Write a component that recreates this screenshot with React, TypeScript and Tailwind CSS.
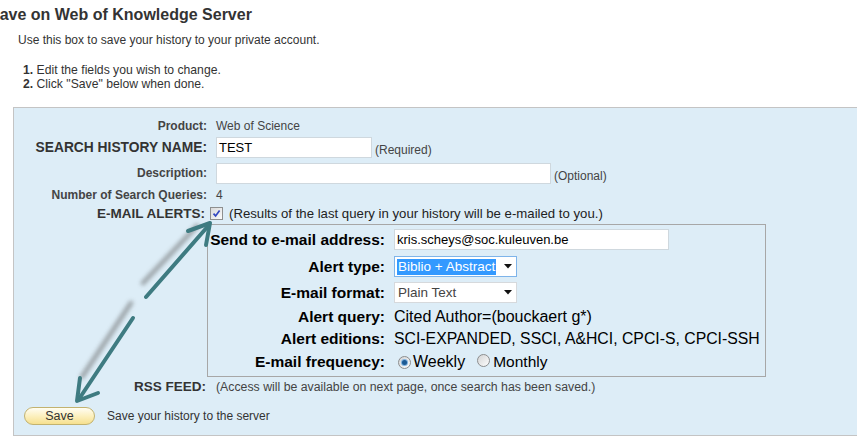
import React from "react";

function Checkbox() {
  return (
    <span className="inline-flex h-[13px] w-[13px] shrink-0 items-center justify-center border border-[#8e8f8f] bg-linear-to-br from-[#d9dadb] to-[#fbfbfb]">
      <svg width="9" height="9" viewBox="0 0 9 9">
        <path d="M1.5 4.6 L3.6 6.9 L7.6 1.6" fill="none" stroke="#3347c0" strokeWidth="1.7" />
      </svg>
    </span>
  );
}

function Radio({ checked }: { checked?: boolean }) {
  return (
    <span className="inline-flex h-[13px] w-[13px] shrink-0 items-center justify-center rounded-full border border-[#8c8d8e] bg-linear-to-br from-[#d3d4d5] to-[#fdfdfd]">
      {checked && <span className="h-[5px] w-[5px] rounded-full bg-[#1d5a94] shadow-[0_0_0_1px_#7fb2df]" />}
    </span>
  );
}

function SelectBox({ text, focused }: { text: string; focused?: boolean }) {
  return (
    <div
      className={
        focused
          ? "flex h-[21px] w-[123px] items-center justify-between border border-[#7eb4ea] bg-white pl-[2px] pr-[4px]"
          : "flex h-[21px] w-[123px] items-center justify-between border border-[#d6d9dc] bg-white pl-[2px] pr-[4px]"
      }
    >
      <span
        className={
          focused
            ? "bg-[#3399ff] px-[1px] text-[13.5px] leading-[16px] text-white"
            : "px-[1px] text-[13.5px] leading-[16px] text-[#444]"
        }
      >
        {text}
      </span>
      <svg width="8" height="5" viewBox="0 0 8 5">
        <path d="M0 0H8L4 4.5Z" fill="#111" />
      </svg>
    </div>
  );
}

export default function App() {
  return (
    <div className="relative h-[438px] w-[857px] overflow-hidden bg-white font-['Liberation_Sans',Arial,sans-serif] text-[#333]">
      <h1 className="ml-[-11px] whitespace-nowrap pt-[5px] text-[16px] font-bold leading-[20px] text-[#333]">
        Save on Web of Knowledge Server
      </h1>
      <p className="ml-[18px] mt-[8px] text-[12px] leading-[14px] text-[#333]">
        Use this box to save your history to your private account.
      </p>
      <div className="ml-[23px] mt-[16px] text-[12.2px] leading-[14px] text-[#333]">
        <div>
          <b>1.</b> Edit the fields you wish to change.
        </div>
        <div>
          <b>2.</b> Click "Save" below when done.
        </div>
      </div>

      <div className="ml-[13px] mt-[16px] h-[329px] border border-r-0 border-[#c4c4c4] bg-[#ddedf7] pt-[11px]">
        {/* Product */}
        <div className="flex h-[14px] items-center">
          <div className="w-[193px] shrink-0 text-right text-[12px] font-bold leading-[14px] text-[#444]">Product:</div>
          <div className="ml-[9px] text-[12px] leading-[14px] text-[#444]">Web of Science</div>
        </div>

        {/* Search history name */}
        <div className="mt-[4px] flex h-[21px] items-stretch">
          <div className="w-[193px] shrink-0 whitespace-nowrap text-right text-[13.8px] font-bold leading-[21px] text-[#333]">
            SEARCH HISTORY NAME:
          </div>
          <div className="ml-[9px] flex items-end">
            <div className="flex h-[21px] w-[156px] items-center border border-[#cfd8de] bg-white px-[2px] text-[13px] text-black">
              TEST
            </div>
            <span className="mb-[1px] ml-[3px] text-[12px] leading-[14px] text-[#444]">(Required)</span>
          </div>
        </div>

        {/* Description */}
        <div className="mt-[5px] flex h-[21px] items-stretch">
          <div className="w-[193px] shrink-0 text-right text-[12px] font-bold leading-[21px] text-[#444]">Description:</div>
          <div className="ml-[9px] flex items-end">
            <div className="h-[21px] w-[335px] border border-[#cfd8de] bg-white" />
            <span className="mb-[1px] ml-[3px] text-[12px] leading-[14px] text-[#444]">(Optional)</span>
          </div>
        </div>

        {/* Number of queries */}
        <div className="mt-[4px] flex h-[14px] items-center">
          <div className="w-[193px] shrink-0 text-right text-[12px] font-bold leading-[14px] text-[#444]">
            Number of Search Queries:
          </div>
          <div className="ml-[9px] text-[12px] leading-[14px] text-[#444]">4</div>
        </div>

        {/* E-mail alerts */}
        <div className="mt-[3px] flex h-[17px] items-center">
          <div className="w-[193px] shrink-0 pr-[2px] text-right text-[13.5px] font-bold leading-[17px] text-[#333]">
            E-MAIL ALERTS:
          </div>
          <div className="ml-[3px] flex items-center">
            <Checkbox />
            <span className="ml-[6px] whitespace-nowrap text-[13.2px] leading-[17px] text-[#222]">
              (Results of the last query in your history will be e-mailed to you.)
            </span>
          </div>
        </div>

        {/* Inner alert box */}
        <div className="ml-[193px] mt-[2px] h-[153px] w-[559px] border border-[#a7a7a7] pt-[4px] text-black">
          <div className="flex h-[21px] items-stretch">
            <div className="w-[177px] shrink-0 whitespace-nowrap text-right text-[15.5px] font-bold leading-[22px]">
              Send to e-mail address:
            </div>
            <div className="ml-[9px] flex h-[21px] w-[275px] items-center border border-[#cfd8de] bg-white px-[2px] text-[13px]">
              kris.scheys@soc.kuleuven.be
            </div>
          </div>

          <div className="mt-[6px] flex h-[21px] items-stretch">
            <div className="w-[177px] shrink-0 text-right text-[15.5px] font-bold leading-[22px]">Alert type:</div>
            <div className="ml-[9px]">
              <SelectBox text="Biblio + Abstract" focused />
            </div>
          </div>

          <div className="mt-[5px] flex h-[21px] items-stretch">
            <div className="w-[177px] shrink-0 text-right text-[15.5px] font-bold leading-[22px]">E-mail format:</div>
            <div className="ml-[9px]">
              <SelectBox text="Plain Text" />
            </div>
          </div>

          <div className="mt-[2px] flex h-[23px] items-center">
            <div className="w-[177px] shrink-0 text-right text-[15.5px] font-bold leading-[23px]">Alert query:</div>
            <div className="ml-[9px] whitespace-nowrap text-[16px] leading-[23px]">Cited Author=(bouckaert g*)</div>
          </div>

          <div className="flex h-[21px] items-center">
            <div className="w-[177px] shrink-0 text-right text-[15.5px] font-bold leading-[21px]">Alert editions:</div>
            <div className="ml-[9px] whitespace-nowrap text-[15.8px] leading-[21px]">
              SCI-EXPANDED, SSCI, A&amp;HCI, CPCI-S, CPCI-SSH
            </div>
          </div>

          <div className="flex h-[26px] items-center">
            <div className="w-[177px] shrink-0 text-right text-[15.5px] font-bold leading-[26px]">E-mail frequency:</div>
            <div className="ml-[13px] flex items-center">
              <Radio checked />
              <span className="ml-[2px] text-[16px] leading-[26px]">Weekly</span>
              <span className="ml-[12px]">
                <Radio />
              </span>
              <span className="ml-[3px] text-[15.5px] leading-[26px]">Monthly</span>
            </div>
          </div>
        </div>

        {/* RSS */}
        <div className="mt-[2px] flex h-[16px] items-center">
          <div className="w-[193px] shrink-0 pr-[1px] text-right text-[13.5px] font-bold leading-[16px] text-[#333]">RSS FEED:</div>
          <div className="ml-[9px] whitespace-nowrap text-[12.3px] leading-[16px] text-[#444]">
            (Access will be available on next page, once search has been saved.)
          </div>
        </div>

        {/* Save */}
        <div className="mt-[12px] flex h-[18px] items-center">
          <button className="ml-[10px] flex h-[18px] w-[71px] items-center justify-center rounded-full border border-[#c2b26f] bg-linear-to-b from-[#fffdf2] via-[#fcf0bf] to-[#f6e08e] text-[12.5px] leading-[16px] text-[#333]">
            Save
          </button>
          <span className="ml-[12px] text-[12px] leading-[18px] text-[#333]">Save your history to the server</span>
        </div>
      </div>

      {/* Annotation arrows */}
      <svg className="pointer-events-none absolute left-0 top-0" width="857" height="438" viewBox="0 0 857 438">
        <defs>
          <filter id="blur" x="-50%" y="-50%" width="200%" height="200%">
            <feGaussianBlur stdDeviation="2.2" />
          </filter>
        </defs>
        <g filter="url(#blur)" stroke="#8b9194" strokeWidth="4.5" strokeLinecap="round" opacity="0.85">
          <line x1="143" y1="283" x2="197" y2="226" />
          <line x1="131" y1="303" x2="82" y2="377" />
        </g>
        <g stroke="#3e7b81" strokeWidth="4" strokeLinecap="round" strokeLinejoin="round" fill="none">
          <line x1="146" y1="297" x2="209" y2="225" />
          <polyline points="188,231 210,223 206,245" />
          <line x1="133" y1="318" x2="79" y2="399" />
          <polyline points="80,378 77,401 98,393" />
        </g>
      </svg>
    </div>
  );
}
